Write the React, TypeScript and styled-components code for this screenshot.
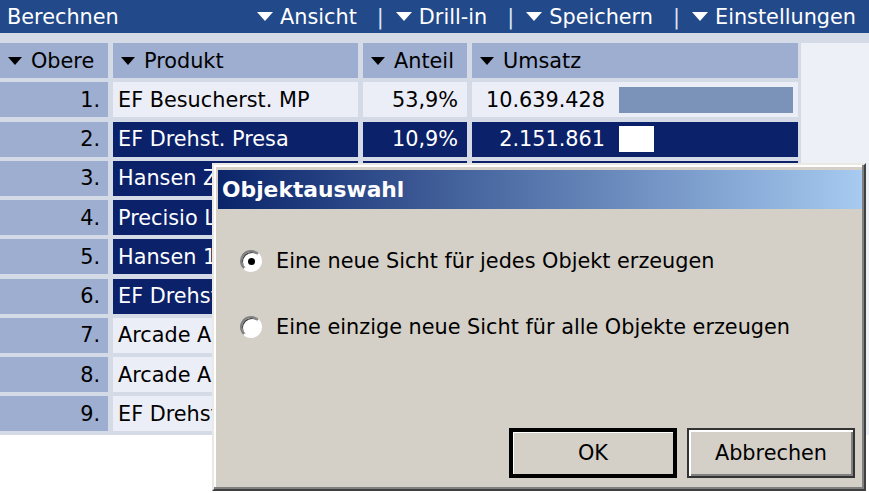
import React from 'react';
import styled, { createGlobalStyle } from 'styled-components';

const GlobalStyle = createGlobalStyle`
  html, body {
    margin: 0;
    padding: 0;
    background: #fff;
  }
  body {
    font-family: "DejaVu Sans", Verdana, sans-serif;
    font-size: 20.8px;
    color: #000;
  }
`;

const Page = styled.div`
  position: relative;
  width: 869px;
  height: 493px;
  overflow: hidden;
  background: #fff;
`;

const TopBar = styled.div`
  display: flex;
  align-items: center;
  justify-content: space-between;
  height: 33px;
  padding: 0 13px 0 7px;
  background: #22498a;
  color: #fff;
`;

const Menu = styled.div`
  display: flex;
  align-items: center;
`;

const MenuItem = styled.span`
  display: flex;
  align-items: center;
  gap: 7px;
`;

const Separator = styled.span`
  margin: 0 12px 0 20px;
  color: #dde3ee;
`;

const Triangle = styled.span<{ $color: string; $w: number; $h: number }>`
  display: inline-block;
  width: 0;
  height: 0;
  border-left: ${(p) => p.$w / 2}px solid transparent;
  border-right: ${(p) => p.$w / 2}px solid transparent;
  border-top: ${(p) => p.$h}px solid ${(p) => p.$color};
`;

const TableArea = styled.div`
  border-top: 10px solid #d4dbe7;
  background: #eef0f8;
`;

const Grid = styled.div`
  display: grid;
  grid-template-columns: 108px 245px 104px 326px;
  grid-auto-rows: 35px;
  column-gap: 5px;
  row-gap: 4.25px;
  width: max-content;
  padding: 0 3px 4px 0;
  background: #d4dbe7;
`;

const HeadCell = styled.div`
  display: flex;
  align-items: center;
  gap: 9px;
  padding-left: 8px;
  background: #9daed0;
  white-space: nowrap;
`;

const RankCell = styled.div`
  display: flex;
  align-items: center;
  justify-content: flex-end;
  padding-right: 8px;
  background: #9daed0;
`;

const Cell = styled.div<{ $selected: boolean; $align?: 'left' | 'right' | 'none' }>`
  display: flex;
  align-items: center;
  justify-content: ${(p) => (p.$align === 'right' ? 'flex-end' : 'flex-start')};
  padding: ${(p) => (p.$align === 'right' ? '0 9px 0 0' : p.$align === 'none' ? '0' : '0 0 0 5px')};
  background: ${(p) => (p.$selected ? '#0b216a' : '#eceef7')};
  color: ${(p) => (p.$selected ? '#fff' : '#000')};
  white-space: nowrap;
  overflow: hidden;
`;

const SalesNumber = styled.span`
  width: 133px;
  text-align: right;
  flex: none;
`;

const SalesBar = styled.span<{ $selected: boolean }>`
  height: 26px;
  margin-left: 14px;
  background: ${(p) => (p.$selected ? '#fff' : '#7b93b8')};
`;

const Dialog = styled.div`
  position: absolute;
  left: 212px;
  top: 163px;
  width: 654px;
  height: 328px;
  box-sizing: border-box;
  display: flex;
  flex-direction: column;
  padding: 5px 2px 0 4px;
  background: #d4d0c8;
  border: 2px solid;
  border-color: #ebe9e4 #404040 #404040 #ebe9e4;
  box-shadow: inset -2px -2px #808080, inset 2px 2px #fff;
`;

const TitleBar = styled.div`
  display: flex;
  align-items: center;
  height: 39px;
  padding-left: 4px;
  background: linear-gradient(to right, #0a246a, #a6caf0);
  color: #fff;
  font-weight: bold;
  font-size: 21.8px;
`;

const DialogBody = styled.div`
  flex: 1;
  display: flex;
  flex-direction: column;
  padding: 41px 7px 11px 22px;
`;

const Options = styled.div`
  display: flex;
  flex-direction: column;
  gap: 44px;
`;

const Option = styled.label`
  display: flex;
  align-items: center;
  gap: 14px;
  height: 22px;
`;

const Radio = styled.span<{ $checked: boolean }>`
  position: relative;
  width: 22px;
  height: 22px;
  box-sizing: border-box;
  border-radius: 50%;
  border: 2px solid;
  border-color: #808080 #fff #fff #808080;
  box-shadow: inset 1px 1px #404040;
  background: #fff;

  &::after {
    content: '';
    display: ${(p) => (p.$checked ? 'block' : 'none')};
    position: absolute;
    left: 50%;
    top: 50%;
    width: 7px;
    height: 7px;
    margin: -3.5px 0 0 -3.5px;
    border-radius: 50%;
    background: #000;
  }
`;

const Buttons = styled.div`
  display: flex;
  justify-content: flex-end;
  gap: 10px;
  margin-top: auto;
`;

const Button = styled.button<{ $default?: boolean }>`
  width: 168px;
  height: 50px;
  box-sizing: border-box;
  font-family: "DejaVu Sans", Verdana, sans-serif;
  font-size: 20.8px;
  color: #000;
  background: #d4d0c8;
  border: ${(p) => (p.$default ? '4px solid #000' : '2px solid #333')};
  box-shadow: ${(p) => (p.$default ? 'inset 1px 1px #fff' : 'inset 2px 2px #fff, inset -2px -2px #808080')};
  padding: 0;
`;

type Row = { rank: number; product: string; share?: string; sales?: number; selected: boolean };

// rows 3-9: the share and sales columns lie under the dialog
const rows: Row[] = [
  { rank: 1, product: 'EF Besucherst. MP', share: '53,9%', sales: 10639428, selected: false },
  { rank: 2, product: 'EF Drehst. Presa', share: '10,9%', sales: 2151861, selected: true },
  { rank: 3, product: 'Hansen Zahnrad', selected: true },
  { rank: 4, product: 'Precisio Lager', selected: true },
  { rank: 5, product: 'Hansen 1200', selected: true },
  { rank: 6, product: 'EF Drehst. Vario', selected: true },
  { rank: 7, product: 'Arcade A100', selected: false },
  { rank: 8, product: 'Arcade A200', selected: false },
  { rank: 9, product: 'EF Drehst. Mini', selected: false },
];

const maxSales = Math.max(...rows.map((r) => r.sales ?? 0));
const formatNumber = (n: number) => String(n).replace(/\B(?=(\d{3})+(?!\d))/g, '.');

const menu = ['Ansicht', 'Drill-in', 'Speichern', 'Einstellungen'];
const headers = ['Obere', 'Produkt', 'Anteil', 'Umsatz'];

export default function App() {
  return (
    <Page>
      <GlobalStyle />
      <TopBar>
        <span>Berechnen</span>
        <Menu>
          {menu.map((item, i) => (
            <React.Fragment key={item}>
              {i > 0 && <Separator>|</Separator>}
              <MenuItem>
                <Triangle $color="#fff" $w={17} $h={9} />
                {item}
              </MenuItem>
            </React.Fragment>
          ))}
        </Menu>
      </TopBar>
      <TableArea>
        <Grid>
          {headers.map((h) => (
            <HeadCell key={h}>
              <Triangle $color="#000" $w={15} $h={8} />
              {h}
            </HeadCell>
          ))}
          {rows.map((r) => (
            <React.Fragment key={r.rank}>
              <RankCell>{r.rank}.</RankCell>
              <Cell $selected={r.selected}>{r.product}</Cell>
              <Cell $selected={r.selected} $align="right">{r.share}</Cell>
              <Cell $selected={r.selected} $align="none">
                {r.sales !== undefined && (
                  <>
                    <SalesNumber>{formatNumber(r.sales)}</SalesNumber>
                    <SalesBar $selected={r.selected} style={{ width: `${(r.sales / maxSales) * 174}px` }} />
                  </>
                )}
              </Cell>
            </React.Fragment>
          ))}
        </Grid>
      </TableArea>
      <Dialog>
        <TitleBar>Objektauswahl</TitleBar>
        <DialogBody>
          <Options>
            <Option>
              <Radio $checked />
              Eine neue Sicht für jedes Objekt erzeugen
            </Option>
            <Option>
              <Radio $checked={false} />
              Eine einzige neue Sicht für alle Objekte erzeugen
            </Option>
          </Options>
          <Buttons>
            <Button $default>OK</Button>
            <Button>Abbrechen</Button>
          </Buttons>
        </DialogBody>
      </Dialog>
    </Page>
  );
}
